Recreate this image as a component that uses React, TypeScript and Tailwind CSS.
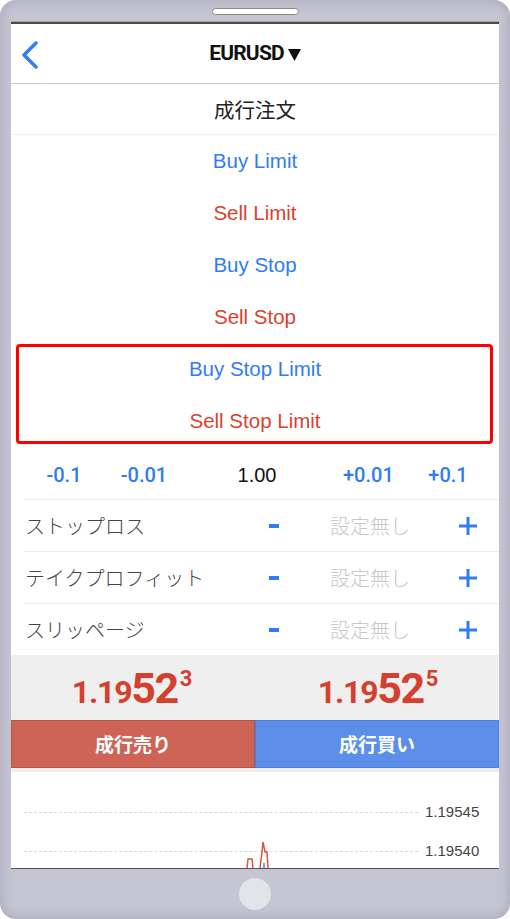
import React from "react";

const orders = [
  { label: "Buy Limit", buy: true },
  { label: "Sell Limit", buy: false },
  { label: "Buy Stop", buy: true },
  { label: "Sell Stop", buy: false },
];

const settings = ["ストップロス", "テイクプロフィット", "スリッページ"];

function OrderRow({ label, buy }: { label: string; buy: boolean }) {
  return (
    <div
      className={`h-[52px] flex items-center justify-center text-[20.5px] ${
        buy ? "text-[#2f7cf4]" : "text-[#d8432f]"
      }`}
    >
      {label}
    </div>
  );
}

function Minus() {
  return (
    <svg width="12" height="6" viewBox="0 0 12 6">
      <rect x="1" y="1" width="10" height="4" fill="#2f7cf4" />
    </svg>
  );
}

function Plus() {
  return (
    <svg width="20" height="20" viewBox="0 0 20 20">
      <path d="M10 1v18M1 10h18" stroke="#2f7cf4" strokeWidth="3" />
    </svg>
  );
}

function Price({ last }: { last: string }) {
  return (
    <div className="flex items-baseline text-[#d5402e] font-bold font-['Roboto',sans-serif] leading-none">
      <span className="text-[32px] tracking-[-1.2px]">1.19</span>
      <span className="text-[43px] tracking-[-1.5px]">52</span>
      <span className="text-[22px] self-start ml-[2px] mt-[1px]">{last}</span>
    </div>
  );
}

export default function App() {
  return (
    <div className="w-[510px] h-[919px] bg-white font-['Liberation_Sans','Noto_Sans_CJK_JP',sans-serif]">
      <div className="w-full h-full rounded-[16px] bg-[#c6c6d3] shadow-[inset_0_0_14px_rgba(140,140,165,0.6)] flex flex-col px-[11px]">
        {/* top bezel with speaker */}
        <div className="h-[21px] flex items-start justify-center pt-[8px]">
          <div className="w-[87px] h-[7px] rounded-full bg-white border border-[#8a8a8a]" />
        </div>
        <div className="h-px bg-[#a6a6a6]" />

        {/* screen */}
        <div className="bg-white border-t-2 border-[#4a4a4a] border-b border-b-[#555] flex flex-col">
          {/* header */}
          <div className="h-[60px] border-b border-[#c8c8c8] relative flex items-center justify-center">
            <svg className="absolute left-[10px] top-[17px]" width="18" height="28" viewBox="0 0 18 28">
              <path d="M15 2 L3 14 L15 26" fill="none" stroke="#2f7cf4" strokeWidth="3.5" strokeLinecap="round" strokeLinejoin="round" />
            </svg>
            <span className="flex items-center gap-[4px] text-[#111] font-['Roboto',sans-serif] font-bold">
              <span className="text-[21px] tracking-[-0.8px]">EURUSD</span>
              <svg width="13" height="12" viewBox="0 0 13 12" className="mt-[3px]">
                <path d="M0 0 H13 L6.5 12 Z" fill="#111" />
              </svg>
            </span>
          </div>

          {/* market order */}
          <div className="h-[51px] border-b border-[#f1f1f1] flex items-center justify-center text-[20.5px] text-[#222] font-['Noto_Sans_CJK_JP',sans-serif]">
            成行注文
          </div>

          {orders.map((o) => (
            <OrderRow key={o.label} label={o.label} buy={o.buy} />
          ))}

          <div className="relative">
            <OrderRow label="Buy Stop Limit" buy={true} />
            <OrderRow label="Sell Stop Limit" buy={false} />
            <div className="absolute top-[1px] bottom-[3px] left-[5px] right-[6px] border-[3px] border-[#ff0000] rounded-[4px]" />
          </div>

          {/* lot row */}
          <div className="h-[52px] pt-[3px] grid grid-cols-[106px_54px_172px_48px_1fr] items-center text-[20px]">
            <span className="text-center text-[#2f7cf4] font-['Roboto',sans-serif] font-medium">-0.1</span>
            <span className="text-center text-[#2f7cf4] font-['Roboto',sans-serif] font-medium">-0.01</span>
            <span className="text-center text-[#111]">1.00</span>
            <span className="text-center text-[#2f7cf4] font-['Roboto',sans-serif] font-medium">+0.01</span>
            <span className="text-center text-[#2f7cf4] font-['Roboto',sans-serif] font-medium pl-[6px]">+0.1</span>
          </div>

          {/* settings rows */}
          <div className="ml-[13px] border-t border-[#ececec]">
            {settings.map((s, i) => (
              <div
                key={s}
                className={`grid grid-cols-[220px_60px_132px_1fr] items-center ${
                  i < 2 ? "h-[52px] border-b border-[#ececec]" : "h-[51px]"
                }`}
              >
                <span className="pl-[1px] text-[20px] text-[#444] font-['Noto_Sans_CJK_JP',sans-serif] font-light">{s}</span>
                <span className="flex justify-center">
                  <Minus />
                </span>
                <span className="text-center text-[20px] text-[#c8c8cc] font-['Noto_Sans_CJK_JP',sans-serif] font-light">設定無し</span>
                <span className="flex justify-center">
                  <Plus />
                </span>
              </div>
            ))}
          </div>

          {/* prices */}
          <div className="h-[65px] bg-[#efefef] grid grid-cols-2">
            <div className="flex items-center justify-center pt-[2px] pr-[2px]">
              <Price last="3" />
            </div>
            <div className="flex items-center justify-center pt-[2px] pl-[2px]">
              <Price last="5" />
            </div>
          </div>

          {/* buttons */}
          <div className="h-[48px] grid grid-cols-2 font-['Noto_Sans_CJK_JP',sans-serif] font-bold text-white text-[19px]">
            <div className="bg-[#cd6455] border border-[#b5564a] flex items-center justify-center">成行売り</div>
            <div className="bg-[#5b8fea] border border-[#4a7fdf] flex items-center justify-center">成行買い</div>
          </div>

          {/* chart */}
          <div className="h-[100px] border-t-4 border-[#eeeeee] relative text-[15px] text-[#444]">
            <div className="flex items-center h-[20px] mt-[30px]">
              <div className="flex-1 ml-[13px] mr-[7px] border-t border-dashed border-[#d8d8d8]" />
              <span className="w-[74px]">1.19545</span>
            </div>
            <div className="flex items-center h-[20px] mt-[19px]">
              <div className="flex-1 ml-[13px] mr-[7px] border-t border-dashed border-[#d8d8d8]" />
              <span className="w-[74px]">1.19540</span>
            </div>
            <svg className="absolute left-[233px] bottom-0" width="40" height="30" viewBox="0 0 40 30">
              <path d="M3 30 L4 21 L8 21 L9 30" fill="none" stroke="#d9553f" strokeWidth="1.5" />
              <path d="M16 30 L18 14 L19 4 L21 14 L23 14 L24 30" fill="none" stroke="#d9553f" strokeWidth="1.5" />
              <path d="M19 30 L20 25 L21 30" fill="none" stroke="#5b8fea" strokeWidth="1" />
            </svg>
          </div>
        </div>

        {/* bottom bezel with home button */}
        <div className="flex-1 flex items-center justify-center">
          <div className="w-[32px] h-[32px] rounded-full bg-[#e3e3ea]" />
        </div>
      </div>
    </div>
  );
}
